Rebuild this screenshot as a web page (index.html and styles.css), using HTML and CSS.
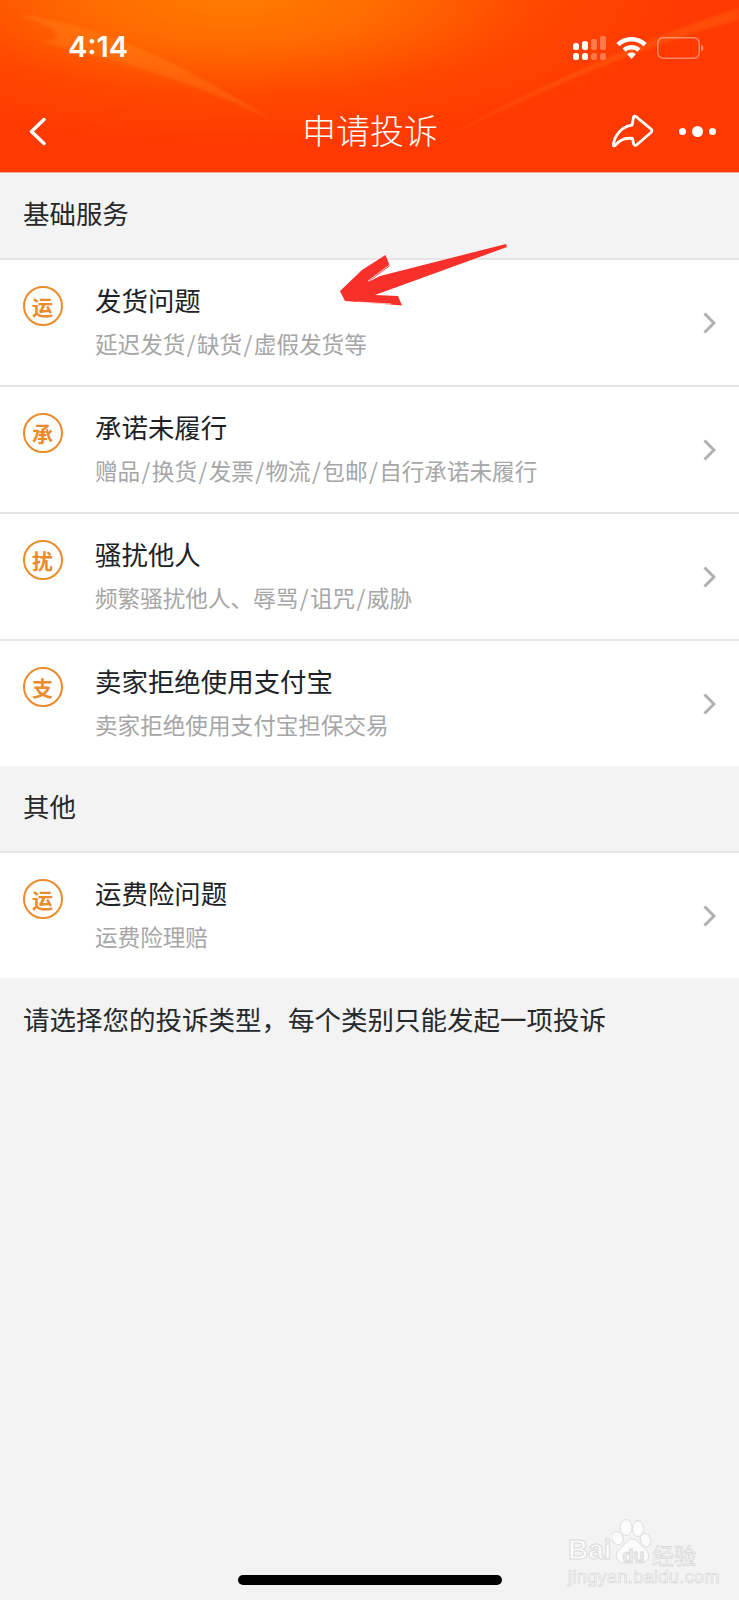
FILE: index.html
```html
<!DOCTYPE html>
<html lang="zh-CN">
<head>
<meta charset="utf-8">
<title>申请投诉</title>
<link rel="stylesheet" href="styles.css">
</head>
<body>
<div class="page">
  <header class="header">
    <svg class="streaks" viewBox="0 0 739 172" aria-hidden="true">
      <path d="M15 14C90 22 170 55 272 120C190 80 110 58 40 42 75 40 50 24 15 14Z" fill="#ff9a2a" opacity=".24"/>
      <path d="M440 140C530 90 640 40 739 8V20C650 44 550 85 440 140Z" fill="#ff9a2a" opacity=".2"/>
    </svg>
    <div class="status">
      <span class="time">4:14</span>
      <div class="status-icons">
        <svg class="signal" width="33" height="24" viewBox="0 0 33 24" aria-hidden="true">
          <rect x="0" y="7" width="6" height="7" rx="2.5" fill="#fff"/><rect x="9" y="5" width="6" height="9" rx="2.5" fill="#fff"/>
          <rect x="18" y="3" width="6" height="11" rx="2" fill="#fff" opacity=".3"/><rect x="27" y="0" width="6" height="14" rx="2" fill="#fff" opacity=".3"/>
          <rect x="0" y="17" width="6" height="7" rx="2.5" fill="#fff"/><rect x="9" y="17" width="6" height="7" rx="2.5" fill="#fff"/>
          <rect x="18" y="17" width="6" height="7" rx="2.5" fill="#fff" opacity=".3"/><rect x="27" y="17" width="6" height="7" rx="2.5" fill="#fff" opacity=".3"/>
        </svg>
        <svg class="wifi" width="31" height="22" viewBox="0 0 31 22" aria-hidden="true">
          <path d="M15.5 0C9.6 0 4.3 2.3.4 6.1l3.1 3.2C6.6 6.300 10.800 4.500 15.500 4.500s8.900 1.800 12 4.800l3.100-3.200C26.700 2.300 21.400 0 15.500 0z" fill="#fff"/>
          <path d="M15.500 8c-3.500 0-6.700 1.400-9 3.600l3.100 3.200c1.500-1.500 3.600-2.300 5.900-2.300s4.400.8 5.900 2.300l3.100-3.200C22.200 9.400 19 8 15.500 8z" fill="#fff"/>
          <path d="M15.500 15.500c-1.800 0-3.300.7-4.300 1.700l4.300 4.800 4.300-4.800c-1-1-2.500-1.700-4.300-1.700z" fill="#fff"/>
        </svg>
        <svg class="battery" width="47" height="22" viewBox="0 0 47 22" aria-hidden="true">
          <rect x=".75" y=".75" width="41.500" height="20.500" rx="5.500" fill="none" stroke="#fff" stroke-opacity=".4" stroke-width="1.500"/>
          <path d="M44 7.500c1.500.5 2.500 2 2.500 3.500s-1 3-2.500 3.500z" fill="#fff" opacity=".4"/>
        </svg>
      </div>
    </div>
    <nav class="nav">
      <svg class="back" width="20" height="30" viewBox="0 0 20 30" aria-hidden="true"><path d="M15 3.500 2.500 15.500 15 27.500" fill="none" stroke="#fff" stroke-width="3.500" stroke-linecap="round" stroke-linejoin="round"/></svg>
      <h1 class="title">申请投诉</h1>
      <div class="nav-actions">
        <svg class="share" width="42" height="34" viewBox="0 0 42 34" aria-hidden="true"><path d="M21.500 3.500C21.500 2 23 1.700 24 2.600L39 15C40 16 40 17.500 39 18.500L24.500 31C23.300 32 21.800 31 21.500 29.500L20.500 24.500C14 23.500 7.500 26 3.500 31.200 2.500 32.500 1 32 1.300 30.500 3 20 10.500 12.500 20 11.200Z" fill="none" stroke="#fff" stroke-width="2.800" stroke-linejoin="round"/></svg>
        <div class="dots"><span class="dot"></span><span class="dot dot-big"></span><span class="dot"></span></div>
      </div>
    </nav>
  </header>

  <h2 class="section-label">基础服务</h2>
  <ul class="list">
    <li class="row">
      <span class="badge">运</span>
      <div class="row-text"><div class="row-title">发货问题</div><div class="row-sub">延迟发货<span class="sl">/</span>缺货<span class="sl">/</span>虚假发货等</div></div>
      <svg class="chev" width="16" height="24" viewBox="0 0 16 24" aria-hidden="true"><path d="M4.500 2.500 14 12 4.500 21.500" fill="none" stroke="#b0b0b0" stroke-width="3"/></svg>
    </li>
    <li class="row">
      <span class="badge">承</span>
      <div class="row-text"><div class="row-title">承诺未履行</div><div class="row-sub">赠品<span class="sl">/</span>换货<span class="sl">/</span>发票<span class="sl">/</span>物流<span class="sl">/</span>包邮<span class="sl">/</span>自行承诺未履行</div></div>
      <svg class="chev" width="16" height="24" viewBox="0 0 16 24" aria-hidden="true"><path d="M4.500 2.500 14 12 4.500 21.500" fill="none" stroke="#b0b0b0" stroke-width="3"/></svg>
    </li>
    <li class="row">
      <span class="badge">扰</span>
      <div class="row-text"><div class="row-title">骚扰他人</div><div class="row-sub">频繁骚扰他人、辱骂<span class="sl">/</span>诅咒<span class="sl">/</span>威胁</div></div>
      <svg class="chev" width="16" height="24" viewBox="0 0 16 24" aria-hidden="true"><path d="M4.500 2.500 14 12 4.500 21.500" fill="none" stroke="#b0b0b0" stroke-width="3"/></svg>
    </li>
    <li class="row">
      <span class="badge">支</span>
      <div class="row-text"><div class="row-title">卖家拒绝使用支付宝</div><div class="row-sub">卖家拒绝使用支付宝担保交易</div></div>
      <svg class="chev" width="16" height="24" viewBox="0 0 16 24" aria-hidden="true"><path d="M4.500 2.500 14 12 4.500 21.500" fill="none" stroke="#b0b0b0" stroke-width="3"/></svg>
    </li>
  </ul>

  <h2 class="section-label">其他</h2>
  <ul class="list">
    <li class="row">
      <span class="badge">运</span>
      <div class="row-text"><div class="row-title">运费险问题</div><div class="row-sub">运费险理赔</div></div>
      <svg class="chev" width="16" height="24" viewBox="0 0 16 24" aria-hidden="true"><path d="M4.500 2.500 14 12 4.500 21.500" fill="none" stroke="#b0b0b0" stroke-width="3"/></svg>
    </li>
  </ul>

  <p class="note">请选择您的投诉类型，每个类别只能发起一项投诉</p>

  <svg class="arrow" width="200" height="80" viewBox="320 235 200 80" aria-hidden="true">
    <path d="M506 244 380 276 368 282 390 266 385.500 255 362 270 340 291 345 301 402 305.500 398 296 375 295 507 247Z" fill="#f9302a"/>
    <path d="M368 281 390 264.500 M357 302 391 304" stroke="#fff" stroke-opacity=".75" stroke-width="1" fill="none"/>
  </svg>

  <div class="watermark">
    <svg class="paw" width="42" height="48" viewBox="0 0 42 48" aria-hidden="true">
      <g fill="#fbfbfb" stroke="#dedede" stroke-width="1">
        <ellipse cx="5.500" cy="20" rx="5.500" ry="7" transform="rotate(-25 5.500 20)"/>
        <ellipse cx="14" cy="9.500" rx="6" ry="8"/>
        <ellipse cx="26" cy="10.500" rx="5.500" ry="8"/>
        <ellipse cx="33.500" cy="22" rx="5" ry="7" transform="rotate(-20 33.500 22)"/>
        <path d="M20 21C25 21 27 26 31 29 36 33 38 37 36 41 34 45 28 46 20 44.500 13 46 7 45 5 41 3 36 6 32 10 29 14 26 15 21 20 21Z"/>
      </g>
    </svg>
    <div class="wm-main"><span class="wm-bai">Bai</span><span class="wm-du">du</span><span class="wm-cn">经验</span></div>
    <div class="wm-url">jingyan.baidu.com</div>
  </div>
  <div class="home-bar"></div>
</div>
</body>
</html>
```

FILE: styles.css
```css
* { box-sizing: border-box; }
html, body { margin: 0; padding: 0; }
body {
  width: 739px;
  height: 1600px;
  overflow: hidden;
  background: #f3f3f3;
  font-family: "Noto Sans CJK SC", "Noto Sans", sans-serif;
}
.page { position: relative; width: 739px; height: 1600px; background: #f3f3f3; }
.header {
  position: relative;
  height: 173px;
  padding: 0 23px 0 29px;
  overflow: hidden;
  border-bottom: 1px solid #f6a58e;
  background:
    radial-gradient(ellipse 450px 150px at 235px -6px, #ff7d00 0%, #ff6a00 35%, rgba(255, 80, 0, .6) 68%, rgba(255, 60, 0, 0) 100%),
    #ff3a00;
}
.streaks { position: absolute; left: 0; top: 0; width: 739px; height: 172px; filter: blur(1.5px); }
.status {
  position: relative;
  display: flex;
  justify-content: space-between;
  align-items: center;
  height: 95px;
  padding: 0 12px 0 39px;
}
.time {
  margin-top: -2px;
  font-family: Inter, "Liberation Sans", sans-serif;
  font-weight: 600;
  font-size: 29px;
  color: #fff;
}
.status-icons { display: flex; align-items: center; }
.signal { margin-right: 10px; }
.wifi { margin-right: 10px; }
.nav {
  position: relative;
  display: flex;
  justify-content: space-between;
  align-items: center;
  height: 72px;
}
.back { flex: none; }
.title {
  position: absolute;
  left: 0; right: 0;
  top: 0;
  margin: 0 0 0 -5px;
  text-align: center;
  font-size: 34px;
  font-weight: 300;
  line-height: 70px;
  color: #fff;
}
.nav-actions { position: relative; display: flex; align-items: center; gap: 25px; }
.dots { display: flex; align-items: center; gap: 6px; }
.dot { width: 7px; height: 7px; border-radius: 50%; background: #fff; }
.dot-big { width: 11px; height: 11px; }

.section-label {
  margin: 0;
  height: 85px;
  padding: 0 0 7px 23px;
  display: flex;
  align-items: center;
  font-size: 26.450px;
  font-weight: 400;
  color: #26292c;
}
.list { list-style: none; margin: 0; padding: 0; background: #fff; border-top: 2px solid #e5e5e5; }
.row {
  display: flex;
  height: 127px;
  padding: 24px 23px 0 22.500px;
  border-bottom: 2px solid #e5e5e5;
}
.row:last-child { border-bottom: 0; height: 125px; }
.badge {
  flex: none;
  width: 40px;
  height: 40px;
  margin-top: 2px;
  border: 2px solid #ea8b2c;
  border-radius: 50%;
  display: flex;
  align-items: center;
  justify-content: center;
  font-size: 21px;
  font-weight: 700;
  color: #ea8b2c;
  line-height: 1;
}
.row-text { flex: 1; margin-left: 32.500px; }
.row-title { font-size: 26.450px; line-height: 36px; color: #1d2227; margin-top: -2px; }
.row-sub { font-size: 22.600px; line-height: 32px; margin-top: 10px; color: #a6a6a6; font-weight: 400; }
.sl { margin: 0 1.400px; }
.chev { flex: none; align-self: center; margin: -24px 0 0 0; }
.note {
  margin: 0;
  padding: 0 0 6px 23px;
  height: 86px;
  display: flex;
  align-items: center;
  font-size: 26.500px;
  color: #26292c;
}
.arrow { position: absolute; left: 320px; top: 235px; }
.watermark {
  position: absolute;
  left: 568px;
  top: 1518px;
  width: 140px;
  height: 68px;
  color: #fbfbfb;
}
.paw { position: absolute; left: 44px; top: 0; }
.wm-main {
  position: absolute;
  left: 0;
  top: 18px;
  display: flex;
  white-space: nowrap;
  line-height: 28px;
  font-family: "Liberation Sans", sans-serif;
  font-weight: 700;
  -webkit-text-stroke: 1px #dadada;
}
.wm-bai { width: 49px; font-size: 28px; }
.wm-du {
  width: 33px;
  margin-top: 6px;
  font-size: 18px;
  text-align: center;
  color: #f0f0f0;
}
.wm-cn {
  margin-top: 4px;
  margin-left: 2px;
  font-family: "Noto Sans CJK SC", sans-serif;
  font-size: 22px;
  font-weight: 400;
  -webkit-text-stroke: .8px #dadada;
}
.wm-url {
  position: absolute;
  left: 0;
  top: 50px;
  white-space: nowrap;
  font-family: "Liberation Sans", sans-serif;
  font-size: 18px;
  line-height: 18px;
  letter-spacing: .4px;
  -webkit-text-stroke: .7px #d8d8d8;
}
.home-bar {
  position: absolute;
  left: 238px;
  top: 1575px;
  width: 264px;
  height: 10px;
  border-radius: 5px;
  background: #000;
}
```
